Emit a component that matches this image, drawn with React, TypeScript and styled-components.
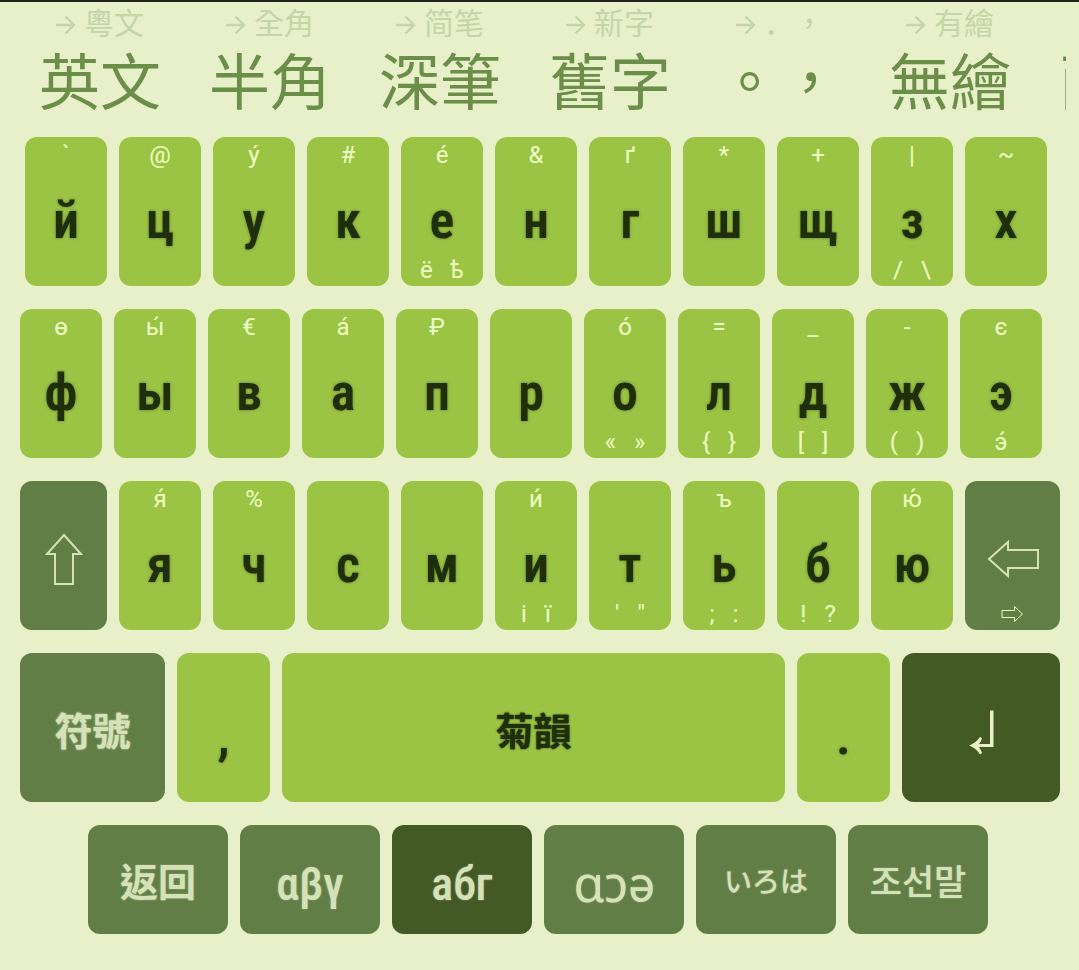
import React from "react";
import styled, { createGlobalStyle, css } from "styled-components";

const palette = {
  page: "#e7f0c9",
  key: "#9bc444",
  func: "#627e47",
  active: "#445a26",
  ink: "#1f2e0b",
  hint: "#eeffc4",
  pale: "#d5e2b7",
  option: "#6b8e49",
  faded: "#c5d5a7",
};

const GlobalStyle = createGlobalStyle`
  * { box-sizing: border-box; }
  body {
    margin: 0;
    background: ${palette.page};
    font-family: Roboto, "Noto Sans", "Noto Sans CJK TC", sans-serif;
  }
  button {
    margin: 0;
    padding: 0;
    border: 0;
    background: none;
    font: inherit;
    color: inherit;
    cursor: pointer;
  }
`;

const Page = styled.main`
  min-height: 100vh;
  border-top: 2px solid #23241b;
`;

const OptionStrip = styled.div`
  display: flex;
  margin: 0 13px 0 15px;
  overflow: hidden;
`;

const OptionButton = styled.button`
  flex: 0 0 170px;
  height: 135px;
  display: flex;
  flex-direction: column;
  align-items: center;
  font-family: "Noto Sans CJK TC", sans-serif;
  white-space: nowrap;
`;

const OptionHint = styled.span`
  display: flex;
  align-items: center;
  gap: 8px;
  height: 38px;
  font-size: 30px;
  line-height: 38px;
  color: ${palette.faded};
`;

const OptionLabel = styled.span`
  font-size: 61px;
  line-height: 78px;
  color: ${palette.option};
`;

const Western = styled.span`
  font-family: "Noto Sans CJK JP", sans-serif;
`;

const Keyboard = styled.section`
  display: flex;
  flex-direction: column;
  gap: 23px;
  padding: 0 19px 36px 20px;
`;

const Row = styled.div<{ $left?: number; $right?: number }>`
  display: flex;
  gap: 12px;
  padding: 0 ${(p) => p.$right ?? 0}px 0 ${(p) => p.$left ?? 0}px;
`;

type Tone = "key" | "func" | "active";

const KeyButton = styled.button<{ $grow: number; $tone: Tone }>`
  flex: ${(p) => p.$grow} 1 0;
  min-width: 0;
  height: 149px;
  border-radius: 12px;
  display: grid;
  grid-template-rows: 36px 1fr 32px;
  justify-items: center;
  align-items: center;
  background: ${(p) => palette[p.$tone]};
  color: ${(p) => (p.$tone === "key" ? palette.ink : palette.pale)};
`;

const hintText = css`
  font-size: 24px;
  line-height: 28px;
  color: ${palette.hint};
`;

const TopHint = styled.span`
  ${hintText}
  grid-row: 1;
`;

const BottomHint = styled.span`
  ${hintText}
  grid-row: 3;
  display: flex;
  gap: 18px;
`;

const Letter = styled.span`
  grid-row: 2;
  padding-top: 14px;
  font-family: "Roboto Condensed", "Liberation Sans Narrow", Roboto, sans-serif;
  font-weight: 600;
  font-size: 52px;
  line-height: 64px;
  text-shadow: 0 0 3px rgba(31, 46, 11, 0.5);
`;

const Word = styled.span`
  grid-row: 2;
  font-family: "Noto Sans CJK TC", sans-serif;
  font-weight: 700;
  font-size: 38px;
  line-height: 46px;
  padding-bottom: 2px;
  text-shadow: 0 0 2px currentColor;
`;

const IconSlot = styled.span`
  grid-row: 2;
  display: flex;
  padding-top: 2px;
`;

const LayoutButton = styled.button<{ $active?: boolean }>`
  flex: 1 1 0;
  min-width: 0;
  height: 109px;
  display: flex;
  align-items: center;
  justify-content: center;
  border-radius: 12px;
  background: ${(p) => (p.$active ? palette.active : palette.func)};
  color: ${palette.pale};
`;

const faces = {
  han: css`
    font: 700 38px/48px "Noto Sans CJK TC", sans-serif;
  `,
  narrow: css`
    padding-top: 8px;
    font: 500 46px/48px "Roboto Condensed", "Liberation Sans Narrow", Roboto, sans-serif;
  `,
  phonetic: css`
    padding-top: 10px;
    font: 400 50px/48px Roboto, "Noto Sans", sans-serif;
  `,
  kana: css`
    font: 500 28px/48px "Noto Sans CJK JP", sans-serif;
  `,
  hangul: css`
    font: 500 35px/48px "Noto Sans CJK KR", sans-serif;
  `,
};

const LayoutName = styled.span<{ $face: keyof typeof faces }>`
  ${(p) => faces[p.$face]}
  text-shadow: 0 0 2px rgba(213, 226, 183, 0.5);
`;

const HintArrow = () => (
  <svg width="20" height="28" viewBox="0 0 20 28" fill="none" stroke="currentColor" strokeWidth="2.400" aria-hidden="true">
    <path d="M0 18H18M9.500 9.500L18 18L9.500 26.500" />
  </svg>
);

const ShiftIcon = () => (
  <svg width="38" height="52" viewBox="0 0 38 52" fill="none" stroke="currentColor" strokeWidth="2">
    <path d="M19 2L36 21H28V51H10V21H2Z" />
  </svg>
);

const BackspaceIcon = () => (
  <svg width="52" height="38" viewBox="0 0 52 38" fill="none" stroke="currentColor" strokeWidth="2">
    <path d="M2 19L21 2V10H51V28H21V36Z" />
  </svg>
);

const DeleteIcon = () => (
  <svg width="23" height="18" viewBox="0 0 23 18" fill="none" stroke="currentColor" strokeWidth="1">
    <path d="M1 5.500H13.500V1.500L21.500 9L13.500 16.500V12.500H1Z" />
  </svg>
);

const EnterIcon = () => (
  <svg width="27" height="51" viewBox="0 -5 27 51" fill={palette.page}>
    <path d="M1 35.500Q8 33 12 27L14 28Q13 32 11 34H22V0.500H25.500V37H11Q13 40 14 43L12 44.500Q8 38 1 35.500Z" />
  </svg>
);

interface Option {
  label: string;
  hint: React.ReactNode;
}

const options: Option[] = [
  { label: "英文", hint: "粵文" },
  { label: "半角", hint: "全角" },
  { label: "深筆", hint: <span lang="zh-Hans">简笔</span> },
  { label: "舊字", hint: "新字" },
  { label: "。，", hint: <span><Western>．</Western>，</span> },
  { label: "無繪", hint: "有繪" },
  { label: "兩行", hint: "單行" },
];

interface KeySpec {
  main: string;
  top?: string;
  bottom?: string[];
}

const rowOne: KeySpec[] = [
  { main: "й", top: "`" },
  { main: "ц", top: "@" },
  { main: "у", top: "ý" },
  { main: "к", top: "#" },
  { main: "е", top: "é", bottom: ["ё", "ѣ"] },
  { main: "н", top: "&" },
  { main: "г", top: "ґ" },
  { main: "ш", top: "*" },
  { main: "щ", top: "+" },
  { main: "з", top: "|", bottom: ["/", "\\"] },
  { main: "х", top: "~" },
];

const rowTwo: KeySpec[] = [
  { main: "ф", top: "ѳ" },
  { main: "ы", top: "ы́" },
  { main: "в", top: "€" },
  { main: "а", top: "á" },
  { main: "п", top: "₽" },
  { main: "р" },
  { main: "о", top: "ó", bottom: ["«", "»"] },
  { main: "л", top: "=", bottom: ["{", "}"] },
  { main: "д", top: "_", bottom: ["[", "]"] },
  { main: "ж", top: "-", bottom: ["(", ")"] },
  { main: "э", top: "є", bottom: ["э́"] },
];

const rowThree: KeySpec[] = [
  { main: "я", top: "я́" },
  { main: "ч", top: "%" },
  { main: "с" },
  { main: "м" },
  { main: "и", top: "и́", bottom: ["і", "ї"] },
  { main: "т", bottom: ["'", '"'] },
  { main: "ь", top: "ъ", bottom: [";", ":"] },
  { main: "б", bottom: ["!", "?"] },
  { main: "ю", top: "ю́" },
];

const LetterKey = ({ main, top, bottom, grow = 82 }: KeySpec & { grow?: number }) => (
  <KeyButton type="button" $grow={grow} $tone="key">
    {top && <TopHint>{top}</TopHint>}
    <Letter>{main}</Letter>
    {bottom && (
      <BottomHint>
        {bottom.map((c) => (
          <span key={c}>{c}</span>
        ))}
      </BottomHint>
    )}
  </KeyButton>
);

export default function App() {
  return (
    <Page lang="zh-Hant">
      <GlobalStyle />
      <OptionStrip>
        {options.map((o) => (
          <OptionButton type="button" key={o.label}>
            <OptionHint>
              <HintArrow />
              {o.hint}
            </OptionHint>
            <OptionLabel>{o.label}</OptionLabel>
          </OptionButton>
        ))}
      </OptionStrip>
      <Keyboard>
        <Row $left={5} $right={13}>
          {rowOne.map((k) => (
            <LetterKey key={k.main} {...k} />
          ))}
        </Row>
        <Row $right={18}>
          {rowTwo.map((k) => (
            <LetterKey key={k.main} {...k} />
          ))}
        </Row>
        <Row>
          <KeyButton type="button" $grow={87} $tone="func" aria-label="Shift">
            <IconSlot><ShiftIcon /></IconSlot>
          </KeyButton>
          {rowThree.map((k) => (
            <LetterKey key={k.main} {...k} />
          ))}
          <KeyButton type="button" $grow={95} $tone="func" aria-label="Backspace">
            <IconSlot><BackspaceIcon /></IconSlot>
            <BottomHint><DeleteIcon /></BottomHint>
          </KeyButton>
        </Row>
        <Row>
          <KeyButton type="button" $grow={145} $tone="func">
            <Word>符號</Word>
          </KeyButton>
          <LetterKey main="," grow={93} />
          <KeyButton type="button" $grow={503} $tone="key">
            <Word>菊韻</Word>
          </KeyButton>
          <LetterKey main="." grow={93} />
          <KeyButton type="button" $grow={158} $tone="active" aria-label="Enter">
            <IconSlot><EnterIcon /></IconSlot>
          </KeyButton>
        </Row>
        <Row $left={68} $right={72}>
          <LayoutButton type="button"><LayoutName $face="han">返回</LayoutName></LayoutButton>
          <LayoutButton type="button"><LayoutName $face="narrow">αβγ</LayoutName></LayoutButton>
          <LayoutButton type="button" $active><LayoutName $face="narrow">абг</LayoutName></LayoutButton>
          <LayoutButton type="button"><LayoutName $face="phonetic">ɑɔə</LayoutName></LayoutButton>
          <LayoutButton type="button"><LayoutName $face="kana">いろは</LayoutName></LayoutButton>
          <LayoutButton type="button"><LayoutName $face="hangul">조선말</LayoutName></LayoutButton>
        </Row>
      </Keyboard>
    </Page>
  );
}
